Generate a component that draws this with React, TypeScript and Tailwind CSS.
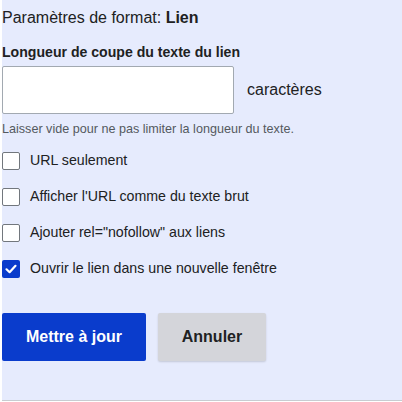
import { useState } from "react"

const options = [
  { label: "URL seulement", checked: false },
  { label: "Afficher l'URL comme du texte brut", checked: false },
  { label: 'Ajouter rel="nofollow" aux liens', checked: false },
  { label: "Ouvrir le lien dans une nouvelle fenêtre", checked: true },
]

const CheckRow = ({ label, initial }: { label: string; initial: boolean }) => {
  const [checked, setChecked] = useState<boolean>(initial)
  return (
    <label className="flex items-center h-5 cursor-pointer" onClick={() => setChecked(p => !p)}>
      {checked ? (
        <span className="w-[18px] h-[18px] rounded-[2px] bg-[#0a3ccc] flex items-center justify-center">
          <svg width="14" height="14" viewBox="0 0 14 14">
            <path d="M2.5 7.3 L5.6 10.2 L11.5 3.8" fill="none" stroke="white" strokeWidth="2.2" strokeLinecap="round" strokeLinejoin="round" />
          </svg>
        </span>
      ) : (
        <span className="w-[18px] h-[18px] rounded-[2px] bg-white border border-[#72777d]" />
      )}
      <span className="ml-[10px] text-[14.2px] text-[#202122]">{label}</span>
    </label>
  )
}

export default function App() {
  return (
    <div className="w-[402px] h-[402px] bg-white" style={{ fontFamily: '"Liberation Sans", Arial, sans-serif' }}>
      <div className="ml-[2px] h-[401px] bg-[#e6ebfd] border-b border-[#c8ccd1] pt-[6px] text-[#202122]">
        <div className="text-[16px] leading-6">
          Paramètres de format: <b>Lien</b>
        </div>

        <div className="mt-3 text-[14.1px] leading-5 font-bold">Longueur de coupe du texte du lien</div>
        <div className="mt-1 flex items-center">
          <input className="w-[232px] h-[48px] bg-white border border-[#a2a9b1] rounded-[2px] px-2 outline-none" />
          <span className="ml-[13px] text-[16px]">caractères</span>
        </div>
        <div className="mt-[7px] text-[12.6px] leading-4 text-[#54595d]">
          Laisser vide pour ne pas limiter la longueur du texte.
        </div>

        <div className="mt-[14px] flex flex-col gap-4">
          {options.map(o => (
            <CheckRow key={o.label} label={o.label} initial={o.checked} />
          ))}
        </div>

        <div className="mt-[34px] flex gap-3">
          <button className="w-[144px] h-[48px] rounded-[2px] bg-[#0a3ccc] text-white text-[16px] font-bold">
            Mettre à jour
          </button>
          <button className="w-[108px] h-[48px] rounded-[2px] bg-[#d4d5da] text-[#202122] text-[16px] font-bold shadow-[0_1px_2px_rgba(0,0,0,0.15)]">
            Annuler
          </button>
        </div>
      </div>
    </div>
  )
}
